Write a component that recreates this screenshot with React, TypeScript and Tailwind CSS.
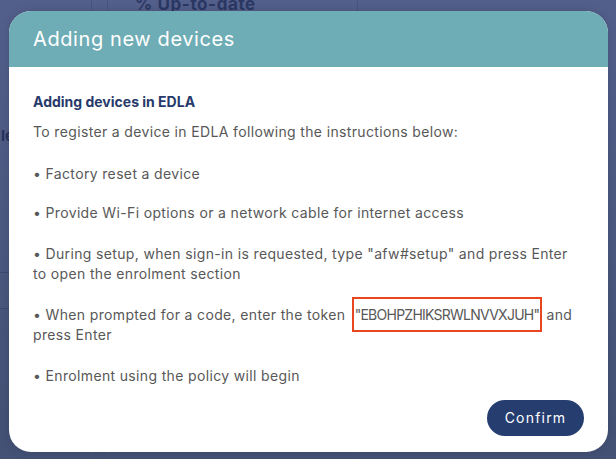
import React from "react";

export default function App() {
  const font = { fontFamily: "Inter, 'Noto Sans', sans-serif" };
  return (
    <div
      className="relative w-[616px] h-[459px] overflow-hidden bg-gradient-to-b from-[#535f8b] to-[#435175]"
      style={font}
    >
      {/* background page (dimmed) */}
      <div className="flex h-full">
        <div className="w-[91px] h-full flex flex-col">
          <div className="h-[126px]" />
          <div className="text-[15px] font-bold text-[#26325c] leading-[20px] pl-[1px]">le</div>
          <div className="h-[126px]" />
          <div className="border-t border-[#3d4a6e] h-[36px]" />
          <div className="border-t border-[#3d4a6e]" />
        </div>
        <div className="w-[16px] h-full border-l border-[#47557c]" />
        <div className="w-[250px] h-full border-l border-[#47557c] flex flex-col">
          <div className="pl-[27px] -mt-[6px] text-[17px] font-bold text-[#2b3763] leading-[20px] tracking-[0.6px]">% Up-to-date</div>
        </div>
        <div className="flex-1 h-full border-l border-[#47557c]" />
      </div>

      {/* modal */}
      <div className="absolute left-[9px] top-[11px] w-[599px] h-[441px] rounded-[22px] bg-white overflow-hidden flex flex-col shadow-[0_0_8px_rgba(0,0,0,0.15)]">
        <div className="h-[56px] bg-[#6eadb5] flex items-center pl-[24px] shrink-0">
          <span className="text-white text-[20px] leading-[24px] tracking-[0.6px]">Adding new devices</span>
        </div>
        <div className="flex-1 flex flex-col pl-[24px] pr-[24px] pt-[25px] pb-[16px] text-[14px] leading-[20px] text-[#585858] tracking-[0.35px]">
          <div className="font-bold text-[#283a6b] tracking-normal">Adding devices in EDLA</div>
          <div className="mt-[10px]">To register a device in EDLA following the instructions below:</div>
          <div className="mt-[22px]">• Factory reset a device</div>
          <div className="mt-[19px]">• Provide Wi-Fi options or a network cable for internet access</div>
          <div className="mt-[21px]">
            • During setup, when sign-in is requested, type "afw#setup" and press Enter
            <br />
            to open the enrolment section
          </div>
          <div className="mt-[21px]">
            • When prompted for a code, enter the token{" "}
            <span className="ml-[2px] border-2 border-[#e8461e] py-[7px] pl-[1px] pr-[1px] tracking-[-0.75px]">"EBOHPZHIKSRWLNVVXJUH"</span> and
            <br />
            press Enter
          </div>
          <div className="mt-[21px]">• Enrolment using the policy will begin</div>
          <div className="flex-1" />
          <div className="flex justify-end">
            <button className="w-[97px] h-[36px] rounded-full bg-[#263d70] text-white text-[14px] tracking-[1.2px]">
              Confirm
            </button>
          </div>
        </div>
      </div>
    </div>
  );
}
